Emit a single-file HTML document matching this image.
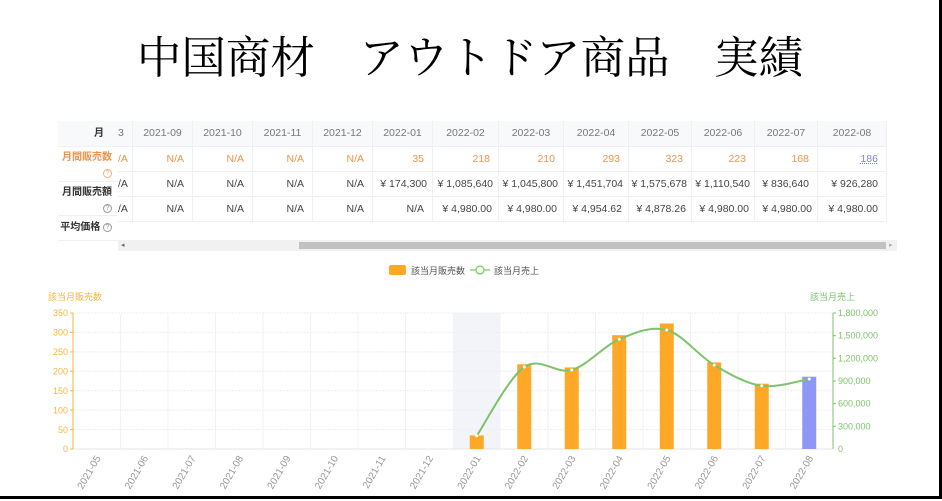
<!DOCTYPE html>
<html><head><meta charset="utf-8"><style>
*{margin:0;padding:0;box-sizing:border-box}
body{width:942px;height:501px;background:#fff;position:relative;overflow:hidden;font-family:"Liberation Sans","Noto Sans CJK JP",sans-serif}
.title{position:absolute;left:0;width:940px;top:30px;text-align:center;font-family:"Liberation Serif","Noto Serif CJK SC",serif;font-size:44.5px;color:#000;white-space:pre;line-height:56px}
.bd-r{position:absolute;left:939px;top:0;width:3px;height:499px;background:#000}
.bd-b{position:absolute;left:0;top:496px;width:942px;height:3px;background:#000}
.tbl{position:absolute;left:118px;top:121px;width:769px;font-size:10.5px;color:#444}
.row{position:absolute;left:0;height:25px;border-bottom:1px solid #eef0f4;width:769px}
.c{position:absolute;top:0;height:100%;border-right:1px solid #eef0f4;text-align:right;padding-right:8px;line-height:25px;white-space:nowrap}
.hdr .c{text-align:center;padding:0;color:#777;background:#f8f9fb}
.or{color:#f0924a}
.left{position:absolute;left:58px;top:121px;width:60px;font-size:10px;font-weight:bold;color:#333;background:#fff;border-right:1px solid #eef0f4}
.left div{position:absolute;left:0;width:60px;text-align:right;padding-right:6px;border-bottom:1px solid #eef0f4}
.q{display:inline-block;width:9px;height:9px;border:1px solid #999;border-radius:50%;font-size:7px;line-height:7px;text-align:center;color:#999;font-weight:normal;vertical-align:middle}
.sb{position:absolute;left:118px;top:240px;width:779px;height:11px;background:#f1f1f1}
.th{position:absolute;left:181px;top:2px;width:587px;height:7px;background:#c1c1c1}
</style></head><body>
<div class="title">中国商材　アウトドア商品　実績</div>
<div class="tbl">
<div class="row hdr" style="top:0;height:26px">
<div class="c" style="left:0;width:15px;text-align:left;padding-left:0">3</div>
<div class="c" style="left:15px;width:60px">2021-09</div><div class="c" style="left:75px;width:60px">2021-10</div><div class="c" style="left:135px;width:60px">2021-11</div><div class="c" style="left:195px;width:60px">2021-12</div><div class="c" style="left:255px;width:60px">2022-01</div><div class="c" style="left:315px;width:66px">2022-02</div><div class="c" style="left:381px;width:65px">2022-03</div><div class="c" style="left:446px;width:65px">2022-04</div><div class="c" style="left:511px;width:63px">2022-05</div><div class="c" style="left:574px;width:63px">2022-06</div><div class="c" style="left:637px;width:63px">2022-07</div><div class="c" style="left:700px;width:69px">2022-08</div>
</div>
<div class="row or" style="top:26px">
<div class="c" style="left:0;width:15px;text-align:left;padding:0">/A</div>
<div class="c" style="left:15px;width:60px">N/A</div><div class="c" style="left:75px;width:60px">N/A</div><div class="c" style="left:135px;width:60px">N/A</div><div class="c" style="left:195px;width:60px">N/A</div><div class="c" style="left:255px;width:60px">35</div><div class="c" style="left:315px;width:66px">218</div><div class="c" style="left:381px;width:65px">210</div><div class="c" style="left:446px;width:65px">293</div><div class="c" style="left:511px;width:63px">323</div><div class="c" style="left:574px;width:63px">223</div><div class="c" style="left:637px;width:63px">168</div><div class="c" style="left:700px;width:69px;color:#7b86d9;text-decoration:underline dotted">186</div>
</div>
<div class="row" style="top:51px">
<div class="c" style="left:0;width:15px;text-align:left;padding:0">/A</div>
<div class="c" style="left:15px;width:60px">N/A</div><div class="c" style="left:75px;width:60px">N/A</div><div class="c" style="left:135px;width:60px">N/A</div><div class="c" style="left:195px;width:60px">N/A</div><div class="c" style="left:255px;width:60px;padding-right:5px">¥ 174,300</div><div class="c" style="left:315px;width:66px;padding-right:5px">¥ 1,085,640</div><div class="c" style="left:381px;width:65px;padding-right:5px">¥ 1,045,800</div><div class="c" style="left:446px;width:65px;padding-right:5px">¥ 1,451,704</div><div class="c" style="left:511px;width:63px;padding-right:4px">¥ 1,575,678</div><div class="c" style="left:574px;width:63px;padding-right:4px">¥ 1,110,540</div><div class="c" style="left:637px;width:63px">¥ 836,640</div><div class="c" style="left:700px;width:69px">¥ 926,280</div>
</div>
<div class="row" style="top:76px">
<div class="c" style="left:0;width:15px;text-align:left;padding:0">/A</div>
<div class="c" style="left:15px;width:60px">N/A</div><div class="c" style="left:75px;width:60px">N/A</div><div class="c" style="left:135px;width:60px">N/A</div><div class="c" style="left:195px;width:60px">N/A</div><div class="c" style="left:255px;width:60px">N/A</div><div class="c" style="left:315px;width:66px;padding-right:6px">¥ 4,980.00</div><div class="c" style="left:381px;width:65px;padding-right:6px">¥ 4,980.00</div><div class="c" style="left:446px;width:65px;padding-right:6px">¥ 4,954.62</div><div class="c" style="left:511px;width:63px;padding-right:5px">¥ 4,878.26</div><div class="c" style="left:574px;width:63px;padding-right:5px">¥ 4,980.00</div><div class="c" style="left:637px;width:63px;padding-right:5px">¥ 4,980.00</div><div class="c" style="left:700px;width:69px">¥ 4,980.00</div>
</div>
</div>
<div class="left">
<div style="top:0;height:26px;line-height:26px;background:#f8f9fb;padding-right:14px">月</div>
<div style="top:26px;height:35px;color:#f0924a;line-height:16px;padding-top:3px">月間販売数<br><span class="q" style="border-color:#f0b080;color:#f0b080">?</span></div>
<div style="top:61px;height:34px;line-height:16px;padding-top:3px">月間販売額<br><span class="q">?</span></div>
<div style="top:95px;height:25px;line-height:24px">平均価格 <span class="q">?</span></div>
</div>
<div class="sb"><div style="position:absolute;left:3px;top:1px;font-size:7px;color:#666">◂</div><div class="th"></div><div style="position:absolute;left:771px;top:1px;font-size:7px;color:#aaa">▸</div></div>
<svg style="position:absolute;left:0;top:0" width="942" height="501" font-family="Liberation Sans, Noto Sans CJK JP, sans-serif">
<rect x="389" y="265" width="17" height="10" rx="2" fill="#ffa726"/>
<text x="411" y="274" font-size="9" fill="#555">該当月販売数</text>
<line x1="470" y1="270" x2="490" y2="270" stroke="#8fcf7a" stroke-width="1.5"/><circle cx="480" cy="270" r="4" fill="#fff" stroke="#8fcf7a" stroke-width="1.5"/>
<text x="494" y="274" font-size="9" fill="#555">該当月売上</text>
<text x="48" y="300" font-size="9" fill="#f5b73b">該当月販売数</text>
<text x="810" y="300" font-size="9" fill="#7cc36a">該当月売上</text>
<rect x="453" y="313" width="47.5" height="136" fill="#f3f4f9"/>
<g stroke="#eeeeee" stroke-dasharray="2,1" stroke-width="1">
<line x1="73" x2="833" y1="313" y2="313"/><line x1="73" x2="833" y1="332.4" y2="332.4"/><line x1="73" x2="833" y1="351.9" y2="351.9"/><line x1="73" x2="833" y1="371.3" y2="371.3"/><line x1="73" x2="833" y1="390.7" y2="390.7"/><line x1="73" x2="833" y1="410.1" y2="410.1"/><line x1="73" x2="833" y1="429.6" y2="429.6"/>
</g>
<g stroke="#f2f2f2">
<line x1="120.5" x2="120.5" y1="313" y2="449"/><line x1="168" x2="168" y1="313" y2="449"/><line x1="215.5" x2="215.5" y1="313" y2="449"/><line x1="263" x2="263" y1="313" y2="449"/><line x1="310.5" x2="310.5" y1="313" y2="449"/><line x1="358" x2="358" y1="313" y2="449"/><line x1="405.5" x2="405.5" y1="313" y2="449"/><line x1="548" x2="548" y1="313" y2="449"/><line x1="595.5" x2="595.5" y1="313" y2="449"/><line x1="643" x2="643" y1="313" y2="449"/><line x1="690.5" x2="690.5" y1="313" y2="449"/><line x1="738" x2="738" y1="313" y2="449"/><line x1="785.5" x2="785.5" y1="313" y2="449"/>
</g>
<line x1="73" x2="833" y1="449" y2="449" stroke="#e6e6e6"/>
<line x1="73" x2="73" y1="313" y2="449" stroke="#f5b73b"/>
<line x1="833" x2="833" y1="313" y2="449" stroke="#7cc36a"/>
<g font-size="9" fill="#f5b73b" text-anchor="end">
<text x="68" y="316">350</text><text x="68" y="335.5">300</text><text x="68" y="355">250</text><text x="68" y="374.5">200</text><text x="68" y="394">150</text><text x="68" y="413.5">100</text><text x="68" y="433">50</text><text x="68" y="452">0</text>
</g>
<g stroke="#f5b73b"><line x1="70" x2="73" y1="313" y2="313"/><line x1="70" x2="73" y1="332.4" y2="332.4"/><line x1="70" x2="73" y1="351.9" y2="351.9"/><line x1="70" x2="73" y1="371.3" y2="371.3"/><line x1="70" x2="73" y1="390.7" y2="390.7"/><line x1="70" x2="73" y1="410.1" y2="410.1"/><line x1="70" x2="73" y1="429.6" y2="429.6"/><line x1="70" x2="73" y1="449" y2="449"/></g>
<g font-size="9" fill="#7cc36a">
<text x="838" y="316">1,800,000</text><text x="838" y="338.7">1,500,000</text><text x="838" y="361.3">1,200,000</text><text x="838" y="384">900,000</text><text x="838" y="406.7">600,000</text><text x="838" y="429.3">300,000</text><text x="838" y="452">0</text>
</g>
<g stroke="#7cc36a"><line x1="833" x2="836" y1="313" y2="313"/><line x1="833" x2="836" y1="335.7" y2="335.7"/><line x1="833" x2="836" y1="358.3" y2="358.3"/><line x1="833" x2="836" y1="381" y2="381"/><line x1="833" x2="836" y1="403.7" y2="403.7"/><line x1="833" x2="836" y1="426.3" y2="426.3"/></g>
<g fill="#ffa726">
<rect x="469.75" y="435.4" width="14" height="13.6"/><rect x="517.25" y="364.3" width="14" height="84.7"/><rect x="564.75" y="367.4" width="14" height="81.6"/><rect x="612.25" y="335.2" width="14" height="113.8"/><rect x="659.75" y="323.5" width="14" height="125.5"/><rect x="707.25" y="362.4" width="14" height="86.6"/><rect x="754.75" y="383.7" width="14" height="65.3"/>
</g>
<rect x="802.25" y="376.7" width="14" height="72.3" fill="#8f97f5"/>
<path d="M476.75,435.8 C484.7,424.3 508.4,378 524.25,367 C540.1,356 555.9,374.6 571.75,370 C587.6,365.4 603.4,346 619.25,339.3 C635.1,332.6 650.9,325.7 666.75,330 C682.6,334.3 698.4,355.8 714.25,365.1 C730.1,374.4 745.9,383.5 761.75,385.8 C777.6,388.1 801.3,380.1 809.25,379" fill="none" stroke="#7cc36a" stroke-width="2"/>
<g fill="#fff"><circle cx="476.75" cy="435.8" r="1.5"/><circle cx="524.25" cy="367" r="1.5"/><circle cx="571.75" cy="370" r="1.5"/><circle cx="619.25" cy="339.3" r="1.5"/><circle cx="666.75" cy="330" r="1.5"/><circle cx="714.25" cy="365.1" r="1.5"/><circle cx="761.75" cy="385.8" r="1.5"/><circle cx="809.25" cy="379" r="1.5"/></g>
<g font-size="10" fill="#999" text-anchor="end">
<text transform="translate(101,458) rotate(-60)">2021-05</text><text transform="translate(148.5,458) rotate(-60)">2021-06</text><text transform="translate(196,458) rotate(-60)">2021-07</text><text transform="translate(243.5,458) rotate(-60)">2021-08</text><text transform="translate(291,458) rotate(-60)">2021-09</text><text transform="translate(338.5,458) rotate(-60)">2021-10</text><text transform="translate(386,458) rotate(-60)">2021-11</text><text transform="translate(433.5,458) rotate(-60)">2021-12</text><text transform="translate(481,458) rotate(-60)">2022-01</text><text transform="translate(528.5,458) rotate(-60)">2022-02</text><text transform="translate(576,458) rotate(-60)">2022-03</text><text transform="translate(623.5,458) rotate(-60)">2022-04</text><text transform="translate(671,458) rotate(-60)">2022-05</text><text transform="translate(718.5,458) rotate(-60)">2022-06</text><text transform="translate(766,458) rotate(-60)">2022-07</text><text transform="translate(813.5,458) rotate(-60)">2022-08</text>
</g>
</svg>
<div class="bd-r"></div><div class="bd-b"></div>
</body></html>
